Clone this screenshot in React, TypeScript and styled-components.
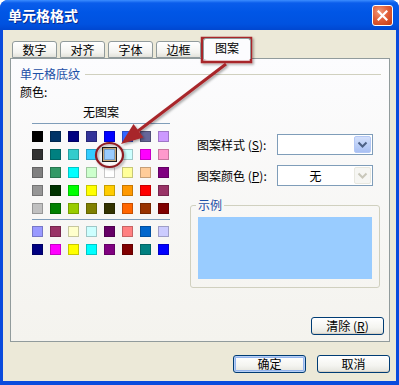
import React from 'react';
import styled, { createGlobalStyle } from 'styled-components';

const Global = createGlobalStyle`
  html, body { margin: 0; padding: 0; background: #ffffff; }
  body { font-family: "Noto Sans CJK SC", "Noto Sans", sans-serif; }
  * { box-sizing: border-box; }
`;

const FONT = `"Noto Sans CJK SC", "Noto Sans", sans-serif`;

const Window = styled.div`
  position: relative;
  width: 399px;
  height: 385px;
  display: flex;
  flex-direction: column;
  background: #0a4bdd;
  border-radius: 8px 8px 0 0;
  overflow: hidden;
  font-family: ${FONT};
`;

const TitleBar = styled.div`
  height: 30px;
  flex: none;
  display: flex;
  align-items: center;
  justify-content: space-between;
  padding: 0 6px 0 8px;
  background: linear-gradient(#3c8dff 0, #0a5deb 3px, #0056e6 40%, #0052e0 80%, #0047d0 100%);
`;

const Title = styled.span`
  color: #ffffff;
  font-weight: bold;
  font-size: 14px;
  line-height: 16px;
  text-shadow: 1px 1px 0 #0a2a8c;
`;

const CloseButton = styled.div`
  width: 21px;
  height: 21px;
  border: 1px solid #ffffff;
  border-radius: 3px;
  background: radial-gradient(circle at 35% 30%, #f29a7a 0, #e2603a 45%, #c4380f 100%);
  display: flex;
  align-items: center;
  justify-content: center;
`;

const Body = styled.div`
  flex: 1;
  margin: 0 3px 4px 3px;
  background: #ece9d8;
  display: flex;
  flex-direction: column;
  padding: 8px 6px 0 7px;
`;

const TabStrip = styled.div`
  display: flex;
  align-items: flex-end;
  height: 20px;
  padding-left: 2px;
  position: relative;
  z-index: 1;
`;

const Tab = styled.div<{ $active?: boolean }>`
  width: ${(p) => (p.$active ? 48 : 45)}px;
  height: ${(p) => (p.$active ? 21 : 17)}px;
  margin-right: 3px;
  margin-left: ${(p) => (p.$active ? -1 : 0)}px;
  margin-bottom: ${(p) => (p.$active ? -1 : 0)}px;
  border: 1px solid #919b9c;
  border-bottom: ${(p) => (p.$active ? 'none' : '1px solid #919b9c')};
  border-radius: 3px 3px 0 0;
  background: ${(p) =>
    p.$active ? '#fcfcfe' : 'linear-gradient(#ffffff, #f3f3ef 70%, #e3e2da)'};
  font-size: 12px;
  line-height: ${(p) => (p.$active ? 18 : 15)}px;
  text-align: center;
  color: #000000;
`;

const Panel = styled.div`
  height: 284px;
  flex: none;
  border: 1px solid #919b9c;
  background: linear-gradient(#fcfcfe, #f4f3ee);
  display: flex;
  flex-direction: column;
`;

const GroupHeader = styled.div`
  display: flex;
  align-items: center;
  height: 14px;
  margin: 8px 8px 0 9px;
  font-size: 12px;
  line-height: 14px;
  color: #1c4fa6;
  &::after {
    content: '';
    flex: 1;
    height: 1px;
    margin-left: 5px;
    background: #d0d0bf;
  }
`;

const Content = styled.div`
  display: flex;
`;

const LeftCol = styled.div`
  width: 179px;
  flex: none;
  padding-left: 9px;
`;

const Label = styled.div`
  font-size: 12px;
  line-height: 12px;
  color: #000000;
`;

const ColorLabel = styled(Label)`
  margin-top: 5px;
`;

const Palette = styled.div`
  margin-left: 12px;
  width: 138px;
`;

const PaletteTitle = styled(Label)`
  margin-top: 8px;
  text-align: center;
`;

const Rule = styled.div<{ $top: number }>`
  margin-top: ${(p) => p.$top}px;
  height: 1px;
  background: #7f9db9;
`;

const SwatchGrid = styled.div<{ $top: number }>`
  margin-top: ${(p) => p.$top}px;
  display: grid;
  grid-template-columns: repeat(8, 11px);
  grid-auto-rows: 11px;
  gap: 7px;
`;

const Swatch = styled.div<{ $selected?: boolean }>`
  width: 11px;
  height: 11px;
  border: 1px solid rgba(0, 0, 0, 0.22);
  box-shadow: ${(p) => (p.$selected ? '0 0 0 1px #c9a877, 0 0 0 2px #1e1e1e' : 'none')};
`;

const RightCol = styled.div`
  flex: 1;
  margin-right: 9px;
  padding-top: 53px;
  display: flex;
  flex-direction: column;
`;

const FieldRow = styled.div<{ $top: number }>`
  display: flex;
  align-items: center;
  height: 21px;
  padding-left: 7px;
  margin-top: ${(p) => p.$top}px;
`;

const FieldLabel = styled.span`
  width: 80px;
  font-size: 12px;
  line-height: 14px;
  color: #000000;
  white-space: nowrap;
`;

const Combo = styled.div`
  width: 96px;
  height: 21px;
  border: 1px solid #7f9db9;
  background: #ffffff;
  display: flex;
  align-items: center;
`;

const ComboText = styled.span`
  flex: 1;
  text-align: center;
  font-size: 12px;
  line-height: 14px;
`;

const ComboButton = styled.div<{ $disabled?: boolean }>`
  width: 17px;
  height: 17px;
  margin: 1px;
  border-radius: 2px;
  border: 1px solid ${(p) => (p.$disabled ? '#e8e8e0' : '#b4c8f5')};
  background: ${(p) =>
    p.$disabled ? '#f6f6f3' : 'linear-gradient(#d4e0fb, #b9cdf7 60%, #a9c0f3)'};
  display: flex;
  align-items: center;
  justify-content: center;
`;

const GroupBox = styled.fieldset`
  margin: 13px 0 0 0;
  padding: 0 7px 8px 7px;
  border: 1px solid #d0d0bf;
  border-radius: 3px;
  min-width: 0;
`;

const Legend = styled.legend`
  margin-left: -2px;
  padding: 0 2px;
  font-size: 12px;
  line-height: 12px;
  color: #1c4fa6;
`;

const Preview = styled.div`
  margin-top: 6px;
  height: 62px;
  background: #99ccff;
`;

const ClearRow = styled.div`
  margin-top: auto;
  display: flex;
  justify-content: flex-end;
  padding: 0 5px 6px 0;
`;

const Button = styled.button<{ $default?: boolean }>`
  width: 73px;
  height: 18px;
  padding: 0;
  font-family: ${FONT};
  font-size: 12px;
  line-height: 14px;
  color: #000000;
  border: 1px solid #003c74;
  border-radius: 3px;
  background: linear-gradient(#ffffff, #f4f4f0 60%, #e4e3dc);
  box-shadow: ${(p) =>
    p.$default
      ? 'inset 0 0 0 1px #b7cff5, inset 0 0 0 2px #93b4ec'
      : 'inset 0 -1px 0 #d6d0c5'};
  & u { text-decoration: underline; }
`;

const Footer = styled.div`
  display: flex;
  justify-content: flex-end;
  gap: 11px;
  margin-top: 13px;
`;

const Overlay = styled.svg`
  position: absolute;
  left: 0;
  top: 0;
  width: 399px;
  height: 385px;
  pointer-events: none;
`;

const Chevron = ({ color }: { color: string }) => (
  <svg width="11" height="8" viewBox="0 0 11 8">
    <path d="M1.5 1.5 L5.5 5.5 L9.5 1.5" fill="none" stroke={color} strokeWidth="2" />
  </svg>
);

const rows1 = [
  ['#000000', '#003366', '#000080', '#333399', '#0000ff', '#3366ff', '#666699', '#cc99ff'],
  ['#333333', '#008080', '#33cccc', '#33ccff', '#99ccff', '#ccffff', '#ff00ff', '#ff99cc'],
  ['#808080', '#339966', '#00ffff', '#ccffcc', '#ffffff', '#ffff99', '#ffcc99', '#800080'],
  ['#969696', '#003300', '#00ff00', '#ffff00', '#ffcc00', '#ff9900', '#ff0000', '#993366'],
  ['#c0c0c0', '#008000', '#99cc00', '#808000', '#333300', '#ff6600', '#993300', '#800000'],
];
const rows2 = [
  ['#9999ff', '#993366', '#ffffcc', '#ccffff', '#660066', '#ff8080', '#0066cc', '#ccccff'],
  ['#000080', '#ff00ff', '#ffff00', '#00ffff', '#800080', '#800000', '#008080', '#0000ff'],
];

const tabs = ['数字', '对齐', '字体', '边框', '图案'];

export default function App() {
  return (
    <>
      <Global />
      <Window>
        <TitleBar>
          <Title>单元格格式</Title>
          <CloseButton>
            <svg width="11" height="11" viewBox="0 0 11 11">
              <path d="M1.5 1.5 L9.5 9.5 M9.5 1.5 L1.5 9.5" stroke="#ffffff" strokeWidth="2.2" strokeLinecap="square" />
            </svg>
          </CloseButton>
        </TitleBar>
        <Body>
          <TabStrip>
            {tabs.map((t, i) => (
              <Tab key={t} $active={i === 4}>
                {t}
              </Tab>
            ))}
          </TabStrip>
          <Panel>
            <GroupHeader>单元格底纹</GroupHeader>
            <Content>
              <LeftCol>
                <ColorLabel>颜色:</ColorLabel>
                <Palette>
                  <PaletteTitle>无图案</PaletteTitle>
                  <Rule $top={5} />
                  <SwatchGrid $top={7}>
                    {rows1.flatMap((r, ri) =>
                      r.map((c, ci) => (
                        <Swatch key={`a${ri}-${ci}`} $selected={ri === 1 && ci === 4} style={{ background: c }} />
                      ))
                    )}
                  </SwatchGrid>
                  <Rule $top={5} />
                  <SwatchGrid $top={6}>
                    {rows2.flatMap((r, ri) =>
                      r.map((c, ci) => <Swatch key={`b${ri}-${ci}`} style={{ background: c }} />)
                    )}
                  </SwatchGrid>
                </Palette>
              </LeftCol>
              <RightCol>
                <FieldRow $top={0}>
                  <FieldLabel>
                    图案样式 (<u>S</u>):
                  </FieldLabel>
                  <Combo>
                    <ComboText />
                    <ComboButton>
                      <Chevron color="#4d6185" />
                    </ComboButton>
                  </Combo>
                </FieldRow>
                <FieldRow $top={10}>
                  <FieldLabel>
                    图案颜色 (<u>P</u>):
                  </FieldLabel>
                  <Combo>
                    <ComboText>无</ComboText>
                    <ComboButton $disabled>
                      <Chevron color="#c9c7ba" />
                    </ComboButton>
                  </Combo>
                </FieldRow>
                <GroupBox>
                  <Legend>示例</Legend>
                  <Preview />
                </GroupBox>
              </RightCol>
            </Content>
            <ClearRow>
              <Button>
                清除 (<u>R</u>)
              </Button>
            </ClearRow>
          </Panel>
          <Footer>
            <Button $default>确定</Button>
            <Button>取消</Button>
          </Footer>
        </Body>
        <Overlay viewBox="0 0 399 385">
          <defs>
            <filter id="sh" x="-20%" y="-20%" width="140%" height="140%">
              <feDropShadow dx="1.5" dy="1.5" stdDeviation="1.2" floodColor="#000000" floodOpacity="0.35" />
            </filter>
          </defs>
          <g filter="url(#sh)" fill="none" stroke="#a8272b">
            <rect x="202" y="38" width="49" height="24" strokeWidth="2.5" />
            <line x1="226" y1="64" x2="138" y2="131" strokeWidth="3" />
            <polygon points="121,144 143.5,137.5 133.5,124" fill="#a8272b" stroke="none" />
            <ellipse cx="109.5" cy="155" rx="13.5" ry="12" strokeWidth="2.2" stroke="#8e1c20" />
          </g>
        </Overlay>
      </Window>
    </>
  );
}
